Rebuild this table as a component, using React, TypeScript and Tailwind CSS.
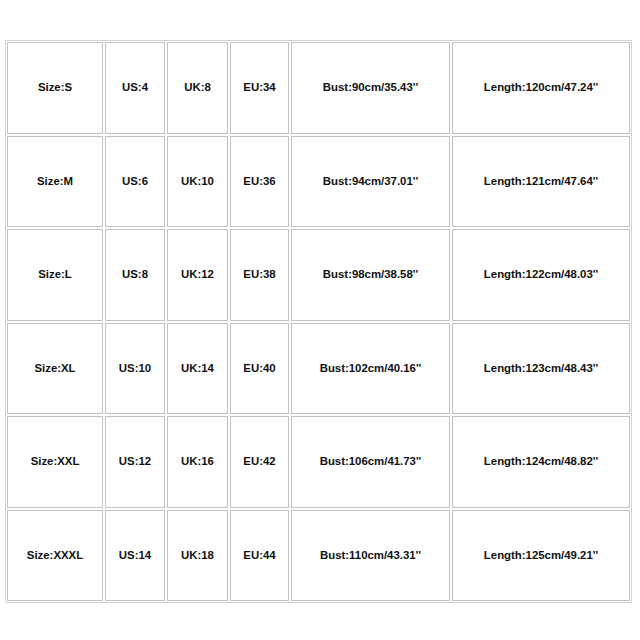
const rows = [
  ["Size:S", "US:4", "UK:8", "EU:34", "Bust:90cm/35.43''", "Length:120cm/47.24''"],
  ["Size:M", "US:6", "UK:10", "EU:36", "Bust:94cm/37.01''", "Length:121cm/47.64''"],
  ["Size:L", "US:8", "UK:12", "EU:38", "Bust:98cm/38.58''", "Length:122cm/48.03''"],
  ["Size:XL", "US:10", "UK:14", "EU:40", "Bust:102cm/40.16''", "Length:123cm/48.43''"],
  ["Size:XXL", "US:12", "UK:16", "EU:42", "Bust:106cm/41.73''", "Length:124cm/48.82''"],
  ["Size:XXXL", "US:14", "UK:18", "EU:44", "Bust:110cm/43.31''", "Length:125cm/49.21''"],
];

export default function App() {
  return (
    <div className="w-[640px] h-[640px] bg-white pt-[40px] pl-[5px]" style={{ fontFamily: '"Liberation Sans", Arial, sans-serif' }}>
      <div className="inline-grid grid-cols-[96px_60px_61px_59px_159px_178px] auto-rows-[91.5px] gap-[2px] p-[1px] border border-[#d2d2d2]">
        {rows.flat().map((text, i) => (
          <div
            key={i}
            className="flex items-center justify-center border border-[#c2c2c2] text-[11.4px] font-bold text-[#111]"
          >
            {text}
          </div>
        ))}
      </div>
    </div>
  );
}
